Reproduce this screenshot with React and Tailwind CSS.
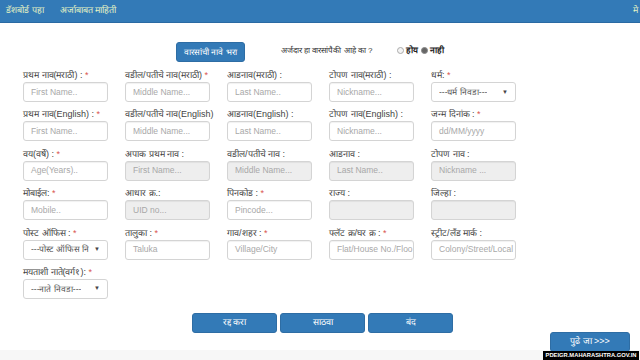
import React from "react";

const F = { fontFamily: '"Liberation Sans", Arial, sans-serif' };

function Label({ text, req }) {
  return (
    <div className="h-[14px] leading-[14px] text-[9px] text-[#444] whitespace-nowrap">
      {text}
      {req && <span className="text-[#d9534f]"> *</span>}
    </div>
  );
}

function Input({ ph, disabled }) {
  return (
    <div
      className={
        "h-[20px] w-[85px] rounded-[3px] border border-[#d4d4d4] shadow-[inset_0_1px_1px_rgba(0,0,0,0.06)] px-[7px] flex items-center text-[8.5px] text-[#a8a8a8] whitespace-nowrap overflow-hidden " +
        (disabled ? "bg-[#eeeeee]" : "bg-white")
      }
    >
      {ph}
    </div>
  );
}

function Select({ text }) {
  return (
    <div className="h-[20px] w-[85px] rounded-[3px] border border-[#d4d4d4] bg-white px-[7px] flex items-center justify-between text-[8.5px] text-[#555] whitespace-nowrap overflow-hidden">
      <span className="overflow-hidden">{text}</span>
      <span className="text-[6px] text-[#444] pl-[2px]">▼</span>
    </div>
  );
}

function Field({ label, req, ph, disabled, select }) {
  return (
    <div className="flex flex-col w-[85px] shrink-0">
      <Label text={label} req={req} />
      {select ? <Select text={ph} /> : <Input ph={ph} disabled={disabled} />}
    </div>
  );
}

const rows = [
  [
    { label: "प्रथम नाव(मराठी) :", req: true, ph: "First Name.." },
    { label: "वडील/पतीचे नाव(मराठी)", req: true, ph: "Middle Name..." },
    { label: "आडनाव(मराठी) :", ph: "Last Name.." },
    { label: "टोपण नाव(मराठी) :", ph: "Nickname..." },
    { label: "धर्म:", req: true, ph: "---धर्म निवडा---", select: true },
  ],
  [
    { label: "प्रथम नाव(English) :", req: true, ph: "First Name.." },
    { label: "वडील/पतीचे नाव(English)", ph: "Middle Name..." },
    { label: "आडनाव(English) :", ph: "Last Name.." },
    { label: "टोपण नाव(English) :", ph: "Nickname..." },
    { label: "जन्म दिनांक :", req: true, ph: "dd/MM/yyyy" },
  ],
  [
    { label: "वय(वर्षे) :", req: true, ph: "Age(Years).." },
    { label: "अपाक प्रथम नाव :", ph: "First Name...", disabled: true },
    { label: "वडील/पतीचे नाव :", ph: "Middle Name...", disabled: true },
    { label: "आडनाव :", ph: "Last Name..", disabled: true },
    { label: "टोपण नाव :", ph: "Nickname ...", disabled: true },
  ],
  [
    { label: "मोबाईल:", req: true, ph: "Mobile.." },
    { label: "आधार क्र.:", ph: "UID no...", disabled: true },
    { label: "पिनकोड :", req: true, ph: "Pincode..." },
    { label: "राज्य :", ph: "", disabled: true },
    { label: "जिल्हा :", ph: "", disabled: true },
  ],
  [
    { label: "पोस्ट ऑफिस :", req: true, ph: "---पोस्ट ऑफिस नि", select: true },
    { label: "तालुका :", req: true, ph: "Taluka" },
    { label: "गाव/शहर :", req: true, ph: "Village/City" },
    { label: "फ्लॅट क्र/घर क्र :", req: true, ph: "Flat/House No./Floo" },
    { label: "स्ट्रीट/लँड मार्क :", ph: "Colony/Street/Local" },
  ],
  [{ label: "मयताशी नाते(वर्ग१):", req: true, ph: "---नाते निवडा---", select: true }],
];

export default function App() {
  return (
    <div className="w-[640px] h-[360px] bg-white overflow-hidden flex flex-col relative" style={F}>
      <div className="h-[23px] bg-[#337ab7] border-b border-[#2a6aa3] flex items-center px-[6px] text-[9px] text-[#e4f3c4] shrink-0">
        <span>डॅशबोर्ड पहा</span>
        <span className="ml-[16px]">अर्जाबाबत माहिती</span>
        <span className="ml-auto -mr-[4px]">मे</span>
      </div>

      <div className="flex items-center mt-[19px] h-[20px] pl-[176px]">
        <div className="w-[69px] h-[20px] rounded-[3px] bg-[#337ab7] border border-[#2e6da4] flex items-center justify-center text-[8.5px] text-white whitespace-nowrap">
          वारसांची नावे भरा
        </div>
        <div className="ml-[36px] text-[8px] text-[#333] whitespace-nowrap -mt-[3px]">
          अर्जदार हा वारसांपैकी आहे का ?
        </div>
        <div className="ml-[24px] flex items-center text-[8.5px] text-[#222] font-bold -mt-[3px]">
          <span className="w-[7px] h-[7px] rounded-full border border-[#aaa] bg-[#f4f4f4] mr-[2px]"></span>
          <span>होय</span>
          <span className="w-[7px] h-[7px] rounded-full border border-[#888] bg-[#666] ml-[3px] mr-[2px]"></span>
          <span>नाही</span>
        </div>
      </div>

      <div className="pl-[23px] mt-[6px] flex flex-col gap-y-[5.4px]">
        {rows.map((r, i) => (
          <div key={i} className="flex gap-x-[17px]">
            {r.map((f, j) => (
              <Field key={j} {...f} />
            ))}
          </div>
        ))}
      </div>

      <div className="flex mt-[14px] pl-[192px] gap-[3px]">
        {["रद्द करा", "साठवा", "बंद"].map((t) => (
          <div key={t} className="w-[85px] h-[20px] rounded-[3px] bg-[#337ab7] border border-[#2e6da4] flex items-center justify-center text-[9px] text-white">
            {t}
          </div>
        ))}
      </div>

      <div className="absolute left-0 right-0 bottom-0 h-[10px] bg-[#f7f7f7]"></div>
      <div className="absolute left-[550px] top-[332px] w-[80px] h-[20px] rounded-[3px] bg-[#337ab7] border border-[#2e6da4] flex items-center justify-center text-[9px] text-white">
        पुढे जा &gt;&gt;&gt;
      </div>
      <div className="absolute left-[543px] top-[351px] w-[96px] h-[9px] bg-black text-white text-[5.8px] font-bold leading-[9px] text-center whitespace-nowrap overflow-hidden">
        PDEIGR.MAHARASHTRA.GOV.IN
      </div>
    </div>
  );
}
